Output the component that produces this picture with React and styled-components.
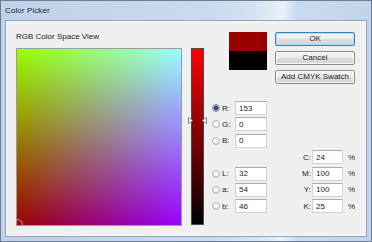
import React from 'react';
import styled, {createGlobalStyle} from 'styled-components';

const GlobalStyle = createGlobalStyle`
  html, body {
    margin: 0;
    padding: 0;
    background: #ffffff;
  }
  body {
    font-family: "Liberation Sans", Arial, sans-serif;
    font-size: 8px;
    color: #1e1e1e;
  }
`;

const Window = styled.div`
  width: 372px;
  height: 242px;
  box-sizing: border-box;
  border: 1px solid #6d7f96;
  display: flex;
  flex-direction: column;
  padding: 0 4px 4px 4px;
  background: linear-gradient(to right, #bfd2e9 0%, #c9daee 55%, #d3e1f1 68%, #eaf1f9 76%, #cadbef 80%, #c2d4ea 100%);
`;

const TitleBar = styled.div`
  height: 19px;
  display: flex;
  align-items: center;
  padding-left: 0;
  font-size: 8px;
  color: #1c2433;
  letter-spacing: 0.1px;
`;

const Client = styled.div`
  flex: 1;
  display: flex;
  align-items: flex-start;
  border: 1px solid #8ea4be;
  background: #f0f0f0;
  box-shadow: inset 0 0 0 1px #f8f8f8;
`;

const LeftCol = styled.div`
  margin-left: 10px;
  padding-top: 11px;
  display: flex;
  flex-direction: column;
`;

const Label = styled.div`
  height: 10px;
  line-height: 10px;
  font-size: 8px;
  color: #222;
`;

const ColorField = styled.div`
  position: relative;
  overflow: hidden;
  margin-top: 6px;
  width: 166px;
  height: 178px;
  box-sizing: border-box;
  border: 1px solid #9c9c9c;
  background:
    linear-gradient(to bottom, #00ff00, #000000),
    linear-gradient(to right, #990000, #9900ff);
  background-blend-mode: lighten;
`;

const FieldMarker = styled.div`
  position: absolute;
  left: -6px;
  bottom: -6px;
  width: 10px;
  height: 10px;
  border-radius: 50%;
  border: 1px solid rgba(255, 255, 255, 0.6);
`;

const Slider = styled.div`
  position: relative;
  margin-left: 9px;
  margin-top: 27px;
  width: 13px;
  height: 177px;
  box-sizing: border-box;
  border: 1px solid #4a4a4a;
  background: linear-gradient(to bottom, #ff0000, #000000);
`;

const SliderArrow = styled.svg`
  position: absolute;
  top: ${p => p.$top}px;
  ${p => (p.$side === 'left' ? 'left: -4px;' : 'right: -4px;')}
`;

const RightCol = styled.div`
  margin-left: 6px;
  padding-top: 11px;
  display: flex;
  flex-direction: column;
  width: 150px;
`;

const TopRow = styled.div`
  display: flex;
  align-items: flex-start;
`;

const Swatch = styled.div`
  margin-left: 19px;
  width: 38px;
  height: 38px;
  display: flex;
  flex-direction: column;
`;

const SwatchHalf = styled.div`
  flex: 1;
  background: ${p => p.$color};
`;

const ButtonStack = styled.div`
  margin-left: 8px;
  display: flex;
  flex-direction: column;
  gap: 5px;
`;

const Button = styled.button`
  width: 80px;
  height: 14px;
  padding: 0;
  box-sizing: border-box;
  font-family: "Liberation Sans", Arial, sans-serif;
  font-size: 8px;
  color: #1e1e1e;
  border-radius: 2px;
  border: 1px solid ${p => (p.$default ? '#3c7fb1' : '#8a8a8a')};
  background: linear-gradient(to bottom, #f4f4f4 0%, #ececec 48%, #dedede 52%, #d2d2d2 100%);
  box-shadow: inset 0 0 0 1px ${p => (p.$default ? '#a8e1f7' : '#fafafa')};
  line-height: 12px;
`;

const Fields = styled.div`
  margin-top: 17px;
  display: grid;
  grid-template-columns: 12px 13px 32px 33px 12px 31px 1fr;
  grid-template-rows: repeat(7, 14px);
  row-gap: 2.4px;
  align-items: center;
`;

const Radio = styled.span`
  grid-column: 1;
  grid-row: ${p => p.$row};
  margin-left: 2px;
  width: 8px;
  height: 8px;
  box-sizing: border-box;
  border-radius: 50%;
  border: 1px solid ${p => (p.$checked ? '#7c8590' : '#b4b8bd')};
  background: ${p => (p.$checked
    ? 'radial-gradient(circle, #2f4c6c 0 1.6px, #6a88a8 2.4px, #dfe4ea 2.8px)'
    : 'radial-gradient(circle at 50% 40%, #ffffff 0 1px, #e6e8ea 3px, #d6d9dc 4px)')};
`;

const FieldLabel = styled.span`
  grid-column: ${p => p.$col};
  grid-row: ${p => p.$row};
  font-size: 8px;
  color: #222;
  text-align: ${p => (p.$right ? 'right' : 'left')};
  padding-right: ${p => (p.$right ? '1px' : '0')};
`;

const Input = styled.input`
  grid-column: ${p => p.$col};
  grid-row: ${p => p.$row};
  width: 100%;
  height: 14px;
  box-sizing: border-box;
  margin: 0;
  padding: 0 0 0 3px;
  border: 1px solid #cfd3d8;
  border-top-color: #a9adb3;
  background: #ffffff;
  font-family: "Liberation Sans", Arial, sans-serif;
  font-size: 8px;
  color: #222;
  outline: none;
`;

const Percent = styled.span`
  grid-column: 7;
  grid-row: ${p => p.$row};
  padding-left: 5px;
  font-size: 8px;
  color: #222;
`;

const rgbLab = [
  {key: 'R', value: '153', row: 1, checked: true},
  {key: 'G', value: '0', row: 2},
  {key: 'B', value: '0', row: 3},
  {key: 'L', value: '32', row: 5},
  {key: 'a', value: '54', row: 6},
  {key: 'b', value: '46', row: 7},
];

const cmyk = [
  {key: 'C', value: '24', row: 4},
  {key: 'M', value: '100', row: 5},
  {key: 'Y', value: '100', row: 6},
  {key: 'K', value: '25', row: 7},
];

function Arrow({side}) {
  const d = side === 'left' ? 'M0.5 0.5 L5 3.5 L0.5 6.5 Z' : 'M5.5 0.5 L1 3.5 L5.5 6.5 Z';
  return (
    <SliderArrow $side={side} $top={68} width="6" height="7" viewBox="0 0 6 7">
      <path d={d} fill="#ffffff" stroke="#6a6a6a" strokeWidth="0.8"/>
    </SliderArrow>
  );
}

export default function App() {
  return (
    <>
      <GlobalStyle/>
      <Window>
        <TitleBar>Color Picker</TitleBar>
        <Client>
          <LeftCol>
            <Label>RGB Color Space View</Label>
            <ColorField>
              <FieldMarker/>
            </ColorField>
          </LeftCol>

          <Slider>
            <Arrow side="left"/>
            <Arrow side="right"/>
          </Slider>

          <RightCol>
            <TopRow>
              <Swatch>
                <SwatchHalf $color="#990000"/>
                <SwatchHalf $color="#000000"/>
              </Swatch>
              <ButtonStack>
                <Button $default>OK</Button>
                <Button>Cancel</Button>
                <Button>Add CMYK Swatch</Button>
              </ButtonStack>
            </TopRow>

            <Fields>
              {rgbLab.map(f => (
                <React.Fragment key={f.key}>
                  <Radio $row={f.row} $checked={f.checked}/>
                  <FieldLabel $col={2} $row={f.row}>{f.key}:</FieldLabel>
                  <Input $col={3} $row={f.row} defaultValue={f.value}/>
                </React.Fragment>
              ))}
              {cmyk.map(f => (
                <React.Fragment key={f.key}>
                  <FieldLabel $col={5} $row={f.row} $right>{f.key}:</FieldLabel>
                  <Input $col={6} $row={f.row} defaultValue={f.value}/>
                  <Percent $row={f.row}>%</Percent>
                </React.Fragment>
              ))}
            </Fields>
          </RightCol>
        </Client>
      </Window>
    </>
  );
}
